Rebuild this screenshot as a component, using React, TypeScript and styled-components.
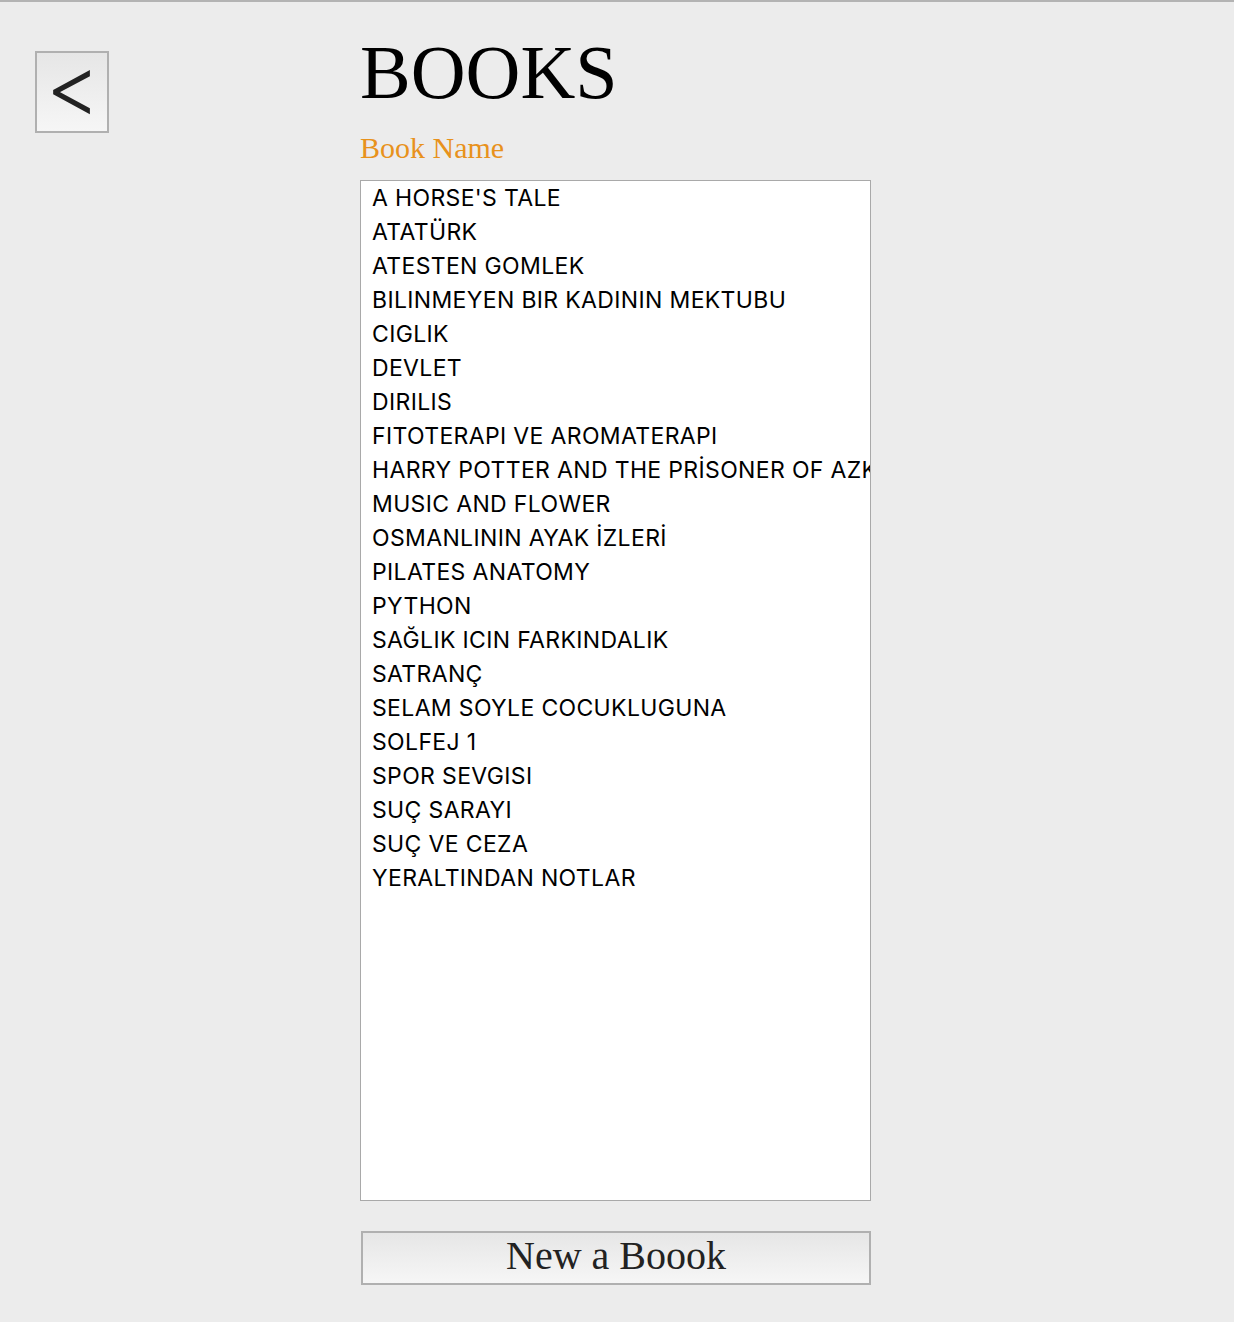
import React from "react";
import styled, { createGlobalStyle } from "styled-components";

const GlobalStyle = createGlobalStyle`
  html, body { margin: 0; padding: 0; }
  body {
    background: #ececec;
    font-family: "Liberation Serif", "Times New Roman", serif;
  }
`;

const Page = styled.div`
  min-height: 1320px;
  border-top: 2px solid #b3b3b3;
  display: flex;
  align-items: flex-start;
  padding-left: 35px;
`;

const BackButton = styled.button`
  box-sizing: border-box;
  width: 74px;
  height: 82px;
  margin-top: 49px;
  margin-right: 251px;
  border: 2px solid #b0b0b0;
  background: linear-gradient(#e6e6e6, #f6f6f6);
  color: #222;
  font-family: "Inter", "Liberation Sans", sans-serif;
  font-weight: 300;
  font-size: 84px;
  line-height: 1;
  padding: 0 0 12px 2px;
  display: flex;
  align-items: center;
  justify-content: center;
  cursor: pointer;
`;

const Main = styled.div`
  width: 511px;
  display: flex;
  flex-direction: column;
`;

const Title = styled.h1`
  margin: 32px 0 0 0;
  font-size: 76px;
  line-height: 76px;
  font-weight: 400;
  color: #000;
`;

const Label = styled.div`
  margin-top: 23px;
  font-size: 30px;
  line-height: 29px;
  color: #e8921c;
`;

const List = styled.ul`
  box-sizing: border-box;
  margin: 18px 0 0 0;
  padding: 0;
  list-style: none;
  height: 1021px;
  background: #fff;
  border: 1px solid #a9a9a9;
  overflow: hidden;
`;

const Item = styled.li`
  height: 34px;
  line-height: 34px;
  padding-left: 11px;
  white-space: nowrap;
  font-family: "Inter", "Liberation Sans", sans-serif;
  font-size: 23px;
  letter-spacing: 0.35px;
  color: #000;
`;

const NewButton = styled.button`
  box-sizing: border-box;
  margin: 30px 0 0 1px;
  width: 510px;
  height: 54px;
  border: 2px solid #b0b0b0;
  background: linear-gradient(#e6e6e6, #f6f6f6);
  font-family: "Liberation Serif", "Times New Roman", serif;
  font-size: 40px;
  line-height: 1;
  color: #222;
  padding: 0 0 5px 0;
  cursor: pointer;
`;

const books = [
  "A HORSE'S TALE",
  "ATATÜRK",
  "ATESTEN GOMLEK",
  "BILINMEYEN BIR KADININ MEKTUBU",
  "CIGLIK",
  "DEVLET",
  "DIRILIS",
  "FITOTERAPI VE AROMATERAPI",
  "HARRY POTTER AND THE PRİSONER OF AZKABAN",
  "MUSIC AND FLOWER",
  "OSMANLININ AYAK İZLERİ",
  "PILATES ANATOMY",
  "PYTHON",
  "SAĞLIK ICIN FARKINDALIK",
  "SATRANÇ",
  "SELAM SOYLE COCUKLUGUNA",
  "SOLFEJ 1",
  "SPOR SEVGISI",
  "SUÇ SARAYI",
  "SUÇ VE CEZA",
  "YERALTINDAN NOTLAR",
];

export default function App() {
  return (
    <>
      <GlobalStyle />
      <Page>
        <BackButton>&lt;</BackButton>
        <Main>
          <Title>BOOKS</Title>
          <Label>Book Name</Label>
          <List>
            {books.map((b) => (
              <Item key={b}>{b}</Item>
            ))}
          </List>
          <NewButton>New a Boook</NewButton>
        </Main>
      </Page>
    </>
  );
}
